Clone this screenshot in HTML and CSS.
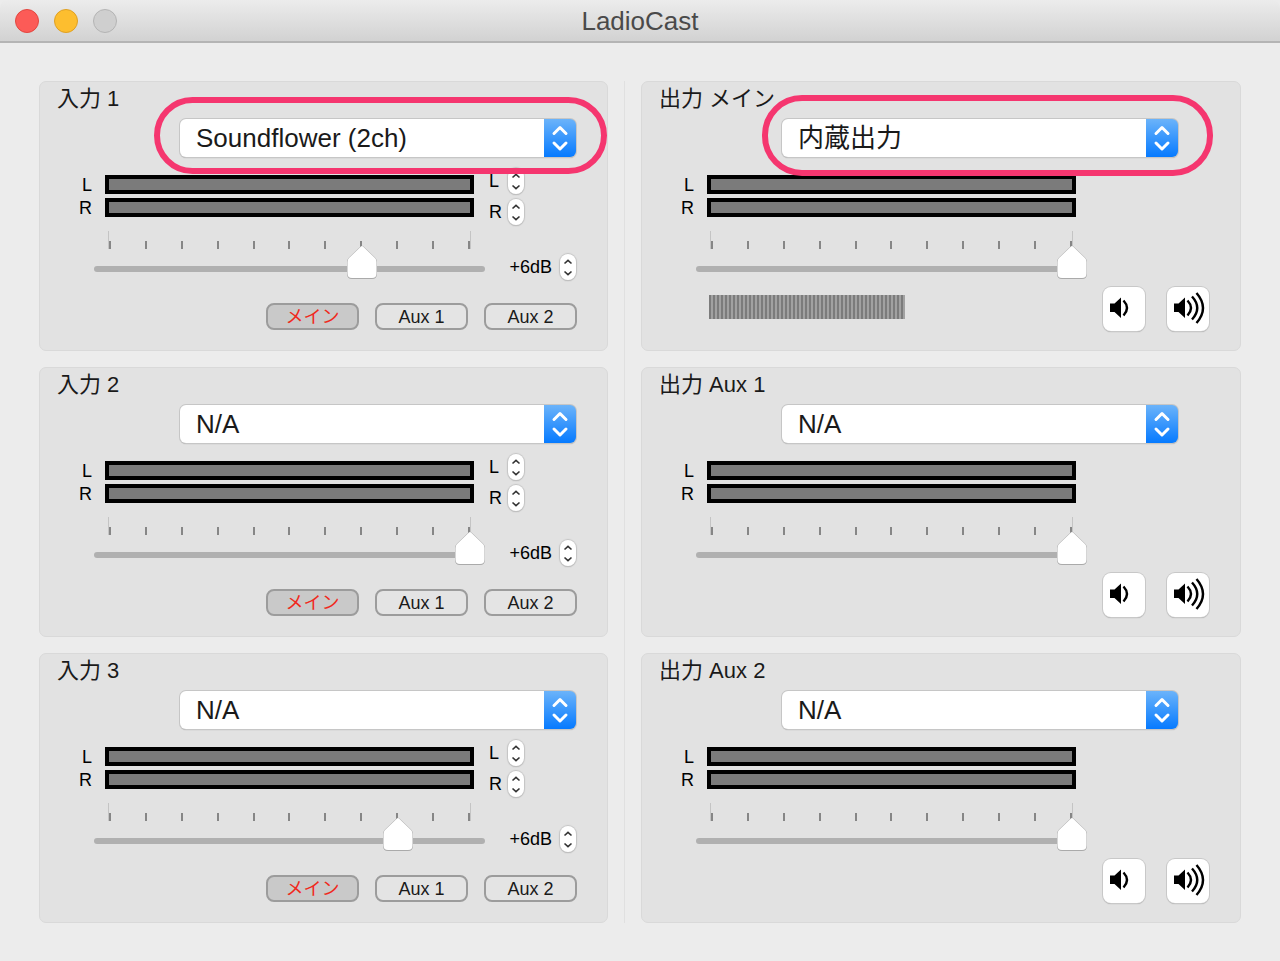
FILE: index.html
```html
<!DOCTYPE html>
<html lang="ja">
<head>
  <meta charset="UTF-8">
  <meta name="viewport" content="width=device-width, initial-scale=1.0">
  <title>LadioCast</title>
  <link rel="stylesheet" href="styles.css">
</head>
<body>
  <!-- Shared icons -->
  <svg class="icons" aria-hidden="true">
    <symbol id="up" viewBox="0 0 16 13"><path d="M4.5 9.5 L8 6.3 L11.5 9.5"/></symbol>
    <symbol id="down" viewBox="0 0 16 13"><path d="M4.5 4.500 L8 7.7 L11.5 4.500"/></symbol>
    <symbol id="quiet" viewBox="0 0 42 44">
      <path class="fill" d="M7 16.500h4.500l6.500-6v20.500l-6.500-6H7z"/>
      <path d="M20.500 13.500 Q27.500 21 20.500 28.500"/>
    </symbol>
    <symbol id="loud" viewBox="0 0 42 44">
      <path class="fill" d="M7 16.500h4.500l6.500-6v20.500l-6.500-6H7z"/>
      <path d="M20.500 13.500 Q27.500 21 20.500 28.500"/>
      <path d="M25 9.500 Q35.500 21 25 32.500"/>
      <path d="M29.500 6 Q42.500 21 29.500 36"/>
    </symbol>
  </svg>

  <header class="titlebar">
    <div class="lights">
      <button class="light close" aria-label="Close"></button>
      <button class="light minimize" aria-label="Minimize"></button>
      <button class="light zoom" aria-label="Zoom" disabled></button>
    </div>
    <h1>LadioCast</h1>
  </header>

  <main>
    <!-- Inputs -->
    <div class="column inputs">
      <section class="panel">
        <h2><label for="in1">入力 1</label></h2>
        <div class="device marked">
          <select id="in1"><option>Soundflower (2ch)</option><option>N/A</option></select>
        </div>
        <div class="meters">
          <div class="names"><span>L</span><span>R</span></div>
          <div class="bars"><div class="bar"></div><div class="bar"></div></div>
          <div class="side">
            <div class="pan"><span>L</span><div class="stepper"><button aria-label="L up"><svg><use href="#up"/></svg></button><button aria-label="L down"><svg><use href="#down"/></svg></button></div></div>
            <div class="pan"><span>R</span><div class="stepper"><button aria-label="R up"><svg><use href="#up"/></svg></button><button aria-label="R down"><svg><use href="#down"/></svg></button></div></div>
          </div>
        </div>
        <div class="level">
          <div class="fader"><div class="ticks"></div><input type="range" min="0" max="10" value="7" aria-label="入力 1 volume"></div>
          <div class="gain"><span>+6dB</span><div class="stepper"><button aria-label="Gain up"><svg><use href="#up"/></svg></button><button aria-label="Gain down"><svg><use href="#down"/></svg></button></div></div>
        </div>
        <div class="routes">
          <button class="route on">メイン</button>
          <button class="route">Aux 1</button>
          <button class="route">Aux 2</button>
        </div>
      </section>

      <section class="panel">
        <h2><label for="in2">入力 2</label></h2>
        <div class="device">
          <select id="in2"><option>N/A</option></select>
        </div>
        <div class="meters">
          <div class="names"><span>L</span><span>R</span></div>
          <div class="bars"><div class="bar"></div><div class="bar"></div></div>
          <div class="side">
            <div class="pan"><span>L</span><div class="stepper"><button aria-label="L up"><svg><use href="#up"/></svg></button><button aria-label="L down"><svg><use href="#down"/></svg></button></div></div>
            <div class="pan"><span>R</span><div class="stepper"><button aria-label="R up"><svg><use href="#up"/></svg></button><button aria-label="R down"><svg><use href="#down"/></svg></button></div></div>
          </div>
        </div>
        <div class="level">
          <div class="fader"><div class="ticks"></div><input type="range" min="0" max="10" value="10" aria-label="入力 2 volume"></div>
          <div class="gain"><span>+6dB</span><div class="stepper"><button aria-label="Gain up"><svg><use href="#up"/></svg></button><button aria-label="Gain down"><svg><use href="#down"/></svg></button></div></div>
        </div>
        <div class="routes">
          <button class="route on">メイン</button>
          <button class="route">Aux 1</button>
          <button class="route">Aux 2</button>
        </div>
      </section>

      <section class="panel">
        <h2><label for="in3">入力 3</label></h2>
        <div class="device">
          <select id="in3"><option>N/A</option></select>
        </div>
        <div class="meters">
          <div class="names"><span>L</span><span>R</span></div>
          <div class="bars"><div class="bar"></div><div class="bar"></div></div>
          <div class="side">
            <div class="pan"><span>L</span><div class="stepper"><button aria-label="L up"><svg><use href="#up"/></svg></button><button aria-label="L down"><svg><use href="#down"/></svg></button></div></div>
            <div class="pan"><span>R</span><div class="stepper"><button aria-label="R up"><svg><use href="#up"/></svg></button><button aria-label="R down"><svg><use href="#down"/></svg></button></div></div>
          </div>
        </div>
        <div class="level">
          <div class="fader"><div class="ticks"></div><input type="range" min="0" max="10" value="8" aria-label="入力 3 volume"></div>
          <div class="gain"><span>+6dB</span><div class="stepper"><button aria-label="Gain up"><svg><use href="#up"/></svg></button><button aria-label="Gain down"><svg><use href="#down"/></svg></button></div></div>
        </div>
        <div class="routes">
          <button class="route on">メイン</button>
          <button class="route">Aux 1</button>
          <button class="route">Aux 2</button>
        </div>
      </section>
    </div>

    <div class="divider"></div>

    <!-- Outputs -->
    <div class="column outputs">
      <section class="panel">
        <h2><label for="out1">出力 メイン</label></h2>
        <div class="device marked">
          <select id="out1"><option>内蔵出力</option><option>N/A</option></select>
        </div>
        <div class="meters">
          <div class="names"><span>L</span><span>R</span></div>
          <div class="bars"><div class="bar"></div><div class="bar"></div></div>
          <div class="side"></div>
        </div>
        <div class="level">
          <div class="fader"><div class="ticks"></div><input type="range" min="0" max="10" value="10" aria-label="出力 メイン volume"></div>
        </div>
        <div class="volume">
          <div class="buffer"></div>
          <button class="speaker" aria-label="Volume down"><svg><use href="#quiet"/></svg></button>
          <button class="speaker" aria-label="Volume up"><svg><use href="#loud"/></svg></button>
        </div>
      </section>

      <section class="panel">
        <h2><label for="out2">出力 Aux 1</label></h2>
        <div class="device">
          <select id="out2"><option>N/A</option></select>
        </div>
        <div class="meters">
          <div class="names"><span>L</span><span>R</span></div>
          <div class="bars"><div class="bar"></div><div class="bar"></div></div>
          <div class="side"></div>
        </div>
        <div class="level">
          <div class="fader"><div class="ticks"></div><input type="range" min="0" max="10" value="10" aria-label="出力 Aux 1 volume"></div>
        </div>
        <div class="volume">
          <button class="speaker" aria-label="Volume down"><svg><use href="#quiet"/></svg></button>
          <button class="speaker" aria-label="Volume up"><svg><use href="#loud"/></svg></button>
        </div>
      </section>

      <section class="panel">
        <h2><label for="out3">出力 Aux 2</label></h2>
        <div class="device">
          <select id="out3"><option>N/A</option></select>
        </div>
        <div class="meters">
          <div class="names"><span>L</span><span>R</span></div>
          <div class="bars"><div class="bar"></div><div class="bar"></div></div>
          <div class="side"></div>
        </div>
        <div class="level">
          <div class="fader"><div class="ticks"></div><input type="range" min="0" max="10" value="10" aria-label="出力 Aux 2 volume"></div>
        </div>
        <div class="volume">
          <button class="speaker" aria-label="Volume down"><svg><use href="#quiet"/></svg></button>
          <button class="speaker" aria-label="Volume up"><svg><use href="#loud"/></svg></button>
        </div>
      </section>
    </div>
  </main>
</body>
</html>
```
FILE: styles.css
```css
* {
  box-sizing: border-box;
}

body {
  margin: 0;
  min-height: 100vh;
  background-color: #ececec;
  color: #1a1a1a;
  font-family: "Liberation Sans", "Noto Sans CJK JP", sans-serif;
  font-size: 18px;
}

button, select, input {
  margin: 0;
  padding: 0;
  border: none;
  font-family: inherit;
  color: inherit;
}

.icons {
  display: none;
}

/* Title bar */
.titlebar {
  display: grid;
  grid-template-columns: 1fr auto 1fr;
  align-items: center;
  height: 43px;
  padding: 0 15px;
  background: linear-gradient(#ececec, #d2d2d2);
  border-bottom: 2px solid #b4b4b4;
  border-radius: 8px 8px 0 0;
}

.titlebar h1 {
  margin: 0;
  padding-top: 2px;
  font-size: 26px;
  font-weight: normal;
  line-height: 39px;
  color: #4a4a4a;
}

.lights {
  display: flex;
  gap: 15px;
}

.light {
  width: 24px;
  height: 24px;
  border: 1px solid #b4b4b4;
  border-radius: 50%;
  background-color: #cfcfcf;
}

.light.close {
  background-color: #fc5b57;
  border-color: #e2463f;
}

.light.minimize {
  background-color: #fdbe2f;
  border-color: #dfa023;
}

/* Columns */
main {
  display: grid;
  grid-template-columns: 569fr 1px 600fr;
  gap: 16px;
  padding: 38px 39px;
}

.column {
  display: flex;
  flex-direction: column;
  gap: 16px;
}

.inputs {
  --side: 133px;
  --end: 31px;
}

.outputs {
  --side: 164px;
  --end: 62px;
}

.divider {
  background-color: #e0e0e0;
}

.panel {
  height: 270px;
  border: 1px solid #d9d9d9;
  border-radius: 7px;
  background-color: #e2e2e2;
}

.panel h2 {
  margin: 0;
  padding-left: 17px;
  font-size: 22px;
  font-weight: normal;
  line-height: 34px;
}

/* Device menu */
.device {
  position: relative;
  margin: 3px var(--end) 0 140px;
}

.device select {
  display: block;
  width: 100%;
  height: 38px;
  padding: 0 40px 0 16px;
  appearance: none;
  border-radius: 6px;
  box-shadow: 0 0 0 1px #c6c6c6, 0 1px 1px #999;
  background: url("data:image/svg+xml,%3Csvg xmlns='http://www.w3.org/2000/svg' width='32' height='38'%3E%3Cdefs%3E%3ClinearGradient id='g' x2='0' y2='1'%3E%3Cstop stop-color='%236bb3fa'/%3E%3Cstop offset='1' stop-color='%23067aff'/%3E%3C/linearGradient%3E%3C/defs%3E%3Cpath fill='url(%23g)' d='M0 0h32v38H0z'/%3E%3Cpath d='M10 14.500l6-6 6 6M10 24l6 6 6-6' fill='none' stroke='white' stroke-width='3' stroke-linecap='round' stroke-linejoin='round'/%3E%3C/svg%3E") right / 32px 38px no-repeat white;
  font-size: 26px;
}

/* Highlight ring round the menus to set */
.marked::after {
  content: "";
  position: absolute;
  z-index: 1;
  inset: -22px -31px -17px -26px;
  border: 6px solid #f5366f;
  border-radius: 40px;
  pointer-events: none;
}

.outputs .marked::after {
  inset: -24px -35px -19px -20px;
}

/* Level meters */
.meters {
  display: flex;
  align-items: center;
  height: 57px;
  margin-top: 11px;
  color: black;
}

.names {
  width: 52px;
  margin-right: 13px;
  text-align: right;
  line-height: 23px;
}

.names span {
  display: block;
}

.bars {
  flex: 1;
  display: flex;
  flex-direction: column;
  gap: 4px;
  padding-bottom: 1px;
}

.bar {
  height: 19px;
  border: 4px solid black;
  background-color: #7b7b7b;
}

.side {
  display: flex;
  flex-direction: column;
  gap: 5px;
  width: var(--side);
  padding-left: 15px;
}

.pan {
  display: flex;
  align-items: center;
}

.pan span {
  width: 19px;
}

.stepper {
  display: flex;
  flex-direction: column;
  width: 16px;
  height: 26px;
  border-radius: 8px;
  background-color: white;
  box-shadow: 0 0 1px 1px #c4c4c4, 0 1px 1px #aaa;
}

.stepper button {
  height: 13px;
  background: none;
}

.stepper svg {
  display: block;
  width: 16px;
  height: 13px;
  fill: none;
  stroke: #333;
  stroke-width: 1.6;
}

/* Faders */
.level {
  display: flex;
  align-items: flex-start;
  height: 55px;
  margin-top: 6px;
  padding-left: 54px;
}

.fader {
  flex: 1;
}

.ticks {
  height: 18px;
  margin: 0 14px;
  border: solid #c4c4c4;
  border-width: 0 1px;
  background: repeating-linear-gradient(to right, #868686 0 2px, transparent 2px calc((100% - 2px) / 10)) bottom / 100% 8px no-repeat;
}

.fader input {
  display: block;
  width: 100%;
  height: 34px;
  margin-top: 3px;
  appearance: none;
  background: none;
}

.fader input::-webkit-slider-runnable-track {
  height: 6px;
  border-radius: 3px;
  background-color: #b0b0b0;
}

.fader input::-webkit-slider-thumb {
  appearance: none;
  width: 30px;
  height: 36px;
  margin-top: -22px;
  background: url("data:image/svg+xml,%3Csvg xmlns='http://www.w3.org/2000/svg' width='30' height='36' viewBox='1 0 30 36'%3E%3Cpath d='M14.500 2.500Q16 1 17.500 2.500L29 13.500Q31 15.500 31 18V30Q31 35 26 35H6Q1 35 1 30V18Q1 15.500 3 13.500Z' fill='%23aaa'/%3E%3Cpath d='M15 2.500Q16 1.500 17 2.500L29 14Q30.500 15.500 30.500 18V29.500Q30.500 34 26 34H6Q1.500 34 1.500 29.500V18Q1.500 15.500 3 14Z' fill='white'/%3E%3C/svg%3E") no-repeat;
}

.gain {
  display: flex;
  align-items: center;
  justify-content: flex-end;
  gap: 8px;
  width: calc(var(--side) - 11px);
  margin-top: 23px;
  padding-right: 31px;
  color: black;
}

.outputs .fader {
  margin-right: calc(var(--side) - 11px);
}

/* Routing buttons */
.routes {
  display: flex;
  justify-content: flex-end;
  gap: 16px;
  margin-top: 17px;
  padding-right: 30px;
}

.route {
  width: 93px;
  height: 27px;
  padding-top: 2px;
  border: 2px solid #9c9c9c;
  border-radius: 8px;
  background-color: #e4e4e4;
  font-size: 18px;
  line-height: 21px;
}

.route.on {
  background-color: #c9c9c9;
  color: #f02a1d;
}

/* Output volume */
.volume {
  display: flex;
  justify-content: flex-end;
  gap: 22px;
  margin-top: 1px;
  padding: 0 31px 0 67px;
}

.buffer {
  width: 196px;
  height: 24px;
  margin: 8px auto 0 0;
  background: repeating-linear-gradient(to right, #7c7c7c 0 2px, #a2a2a2 2px 4px);
}

.speaker {
  width: 42px;
  height: 44px;
  border-radius: 8px;
  background-color: white;
  box-shadow: 0 0 0 1px #c8c8c8, 0 1px 1px #999;
}

.speaker svg {
  display: block;
  width: 42px;
  height: 44px;
  fill: none;
  stroke: black;
  stroke-width: 2.4;
}

.fill {
  fill: black;
  stroke: none;
}
```
